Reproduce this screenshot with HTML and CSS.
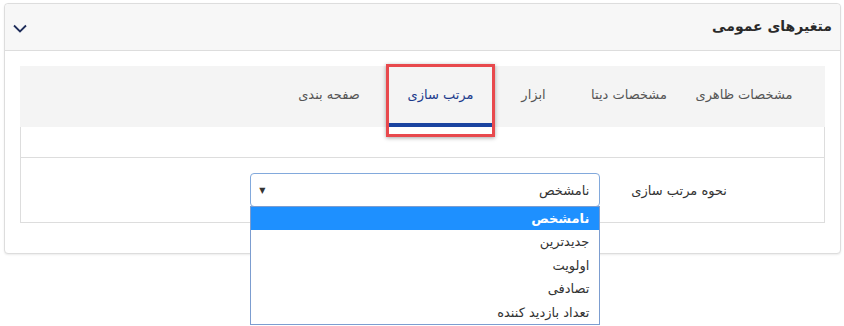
FILE: index.html
```html
<!DOCTYPE html>
<html lang="fa" dir="rtl">
<head>
    <meta charset="UTF-8">
    <title>متغیرهای عمومی</title>
    <link rel="stylesheet" href="styles.css">
</head>
<body>
    <div class="card">
        <div class="card-header">
            <span class="card-title">متغیرهای عمومی</span>
            <svg class="chevron" width="14" height="9" viewBox="0 0 14 9">
                <polyline points="1,1.5 7,7.5 13,1.5" fill="none" stroke="#1f2d5a" stroke-width="1.8"/>
            </svg>
        </div>
        <div class="card-body">
            <div class="tabs">
                <div class="tab tab-1">مشخصات ظاهری</div>
                <div class="tab tab-2">مشخصات دیتا</div>
                <div class="tab tab-3">ابزار</div>
                <div class="tab tab-4 active">مرتب سازی</div>
                <div class="tab tab-5">صفحه بندی</div>
            </div>
            <div class="tab-content">
                <div class="spacer"></div>
                <div class="form-row">
                    <label class="form-label">نحوه مرتب سازی</label>
                    <div class="select-wrap">
                        <div class="select-box">
                            <span>نامشخص</span>
                            <span class="arrow">▼</span>
                        </div>
                        <ul class="options">
                            <li class="selected">نامشخص</li>
                            <li>جدیدترین</li>
                            <li>اولویت</li>
                            <li>تصادفی</li>
                            <li>تعداد بازدید کننده</li>
                        </ul>
                    </div>
                </div>
            </div>
        </div>
    </div>
</body>
</html>
```

FILE: styles.css
```css
html {
    min-height: 326px;
}

body {
    margin: 0;
    padding: 3px;
    min-height: 320px;
    background-color: #fff;
    font-family: "DejaVu Sans", sans-serif;
    color: #333;
}

.card {
    width: 835px;
    border: 1px solid #ddd;
    border-radius: 4px;
    box-shadow: 0 1px 2px rgba(0, 0, 0, 0.08);
    background-color: #fff;
}

.card-header {
    height: 46px;
    display: flex;
    align-items: center;
    justify-content: space-between;
    padding: 0 8px 0 8px;
    background-color: #f7f7f7;
    border-bottom: 1px solid #ddd;
    border-radius: 4px 4px 0 0;
}

.card-title {
    font-size: 14px;
    font-weight: bold;
    color: #2a2a2a;
    margin-top: -2px;
}

.chevron {
    display: block;
    margin-top: 2px;
}

.card-body {
    padding: 15px 15px 30px 15px;
}

.tabs {
    display: flex;
    height: 61px;
    background-color: #f4f4f4;
    padding-right: 20px;
}

.tab {
    position: relative;
    display: flex;
    align-items: center;
    justify-content: center;
    padding-bottom: 4px;
    font-size: 13px;
    color: #555;
}

.tab-1 { width: 122px; }
.tab-2 { width: 108px; }
.tab-3 { width: 83px; }
.tab-4 { width: 103px; }
.tab-5 { width: 120px; }

.tab.active {
    color: #1b3a8c;
}

.tab.active::after {
    content: "";
    position: absolute;
    left: 0;
    right: 0;
    bottom: 0;
    height: 4px;
    background-color: #1a44a0;
}

/* annotation frame around the active tab */
.tab.active::before {
    content: "";
    position: absolute;
    left: -3px;
    right: -3px;
    top: -2px;
    bottom: -10px;
    border: 3px solid #e8494d;
    box-shadow: 0 1px 4px rgba(0, 0, 0, 0.35);
}

.tab-content {
    border: 1px solid #ddd;
    border-top: none;
}

.spacer {
    height: 30px;
    border-bottom: 1px solid #ddd;
}

.form-row {
    display: flex;
    align-items: center;
    height: 64px;
    padding-right: 97px;
}

.form-label {
    font-size: 13px;
    color: #333;
    margin-left: 31px;
}

.select-wrap {
    position: relative;
    width: 350px;
}

.select-box {
    display: flex;
    align-items: center;
    justify-content: space-between;
    height: 34px;
    padding: 0 10px 0 8px;
    border: 1px solid #82a9dc;
    border-radius: 4px;
    font-size: 13px;
    color: #333;
    box-sizing: border-box;
}

.arrow {
    font-size: 8px;
    color: #333;
}

.options {
    position: absolute;
    top: 33px;
    left: 0;
    right: 0;
    margin: 0;
    padding: 0;
    list-style: none;
    background-color: #fff;
    border: 1px solid #7c9dd0;
}

.options li {
    height: 23.4px;
    line-height: 23px;
    padding-right: 10px;
    font-size: 13px;
    color: #333;
}

.options li.selected {
    background-color: #1e90ff;
    color: #fff;
    font-weight: bold;
}
```
